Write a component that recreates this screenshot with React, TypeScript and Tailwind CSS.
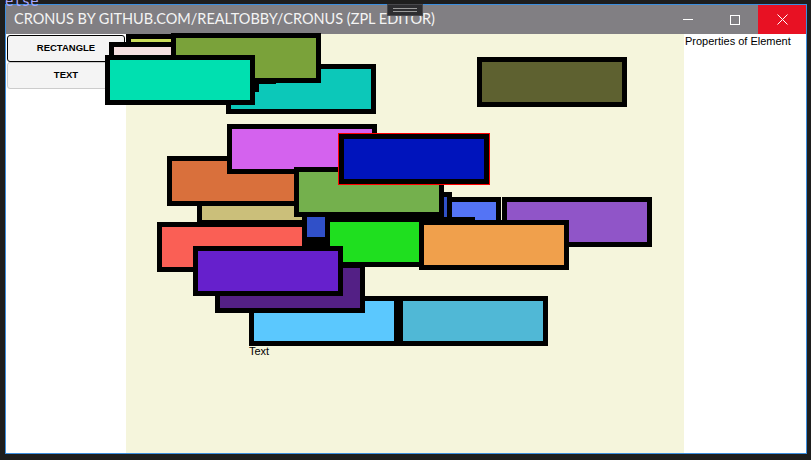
import React from "react";

// Boxes on the ZPL canvas, back to front. Coords are relative to the canvas.
const boxes: { id: string; cls: string }[] = [
  { id: "teal", cls: "left-[100px] top-[30px] bg-[#0cc8b9]" },
  { id: "lime", cls: "left-[0px] top-[0px] bg-[#cbdc5a]" },
  { id: "pink", cls: "left-[-17px] top-[8px] bg-[#f5dfe0]" },
  { id: "olivegreen", cls: "left-[45px] top-[-1px] bg-[#7aa23a]" },
  { id: "mint", cls: "left-[-21px] top-[21px] bg-[#00e0b0]" },
  { id: "olive", cls: "left-[351px] top-[23px] bg-[#5e6130]" },
  { id: "khaki", cls: "left-[71px] top-[141px] bg-[#cbbf7a]" },
  { id: "rust", cls: "left-[41px] top-[122px] bg-[#d9703c]" },
  { id: "magenta", cls: "left-[101px] top-[90px] bg-[#d462ee]" },
  { id: "periwinkle", cls: "left-[225px] top-[163px] bg-[#5474f5]" },
  { id: "purple", cls: "left-[376px] top-[163px] bg-[#9055c8]" },
  { id: "hiddenblue", cls: "left-[176px] top-[162px] bg-[#3050c8]" },
  { id: "smallblue", cls: "left-[176px] top-[158px] bg-[#3050c8]" },
  { id: "green", cls: "left-[168px] top-[133px] bg-[#74b04d]" },
  { id: "selected", cls: "left-[213px] top-[100px] bg-[#0014bc] ring-1 ring-[#ff0000]" },
  { id: "red", cls: "left-[31px] top-[188px] bg-[#fa5f55]" },
  { id: "brightgreen", cls: "left-[199px] top-[183px] bg-[#1fdf1f]" },
  { id: "orange", cls: "left-[293px] top-[186px] bg-[#f0a04c]" },
  { id: "lightblue", cls: "left-[123px] top-[262px] bg-[#5bc8fe]" },
  { id: "cyan", cls: "left-[272px] top-[262px] bg-[#50b8d6]" },
  { id: "darkpurple", cls: "left-[89px] top-[229px] bg-[#532085]" },
  { id: "violet", cls: "left-[67px] top-[212px] bg-[#6620cc]" },
];

function TitleBar() {
  return (
    <div className="flex h-[29px] shrink-0 items-center bg-[#817f83]">
      <div className="flex-1 pl-[8px] text-[14.5px] leading-none text-[#f4f4f4] [font-family:Lato,'Liberation_Sans',sans-serif]">
        CRONUS BY GITHUB.COM/REALTOBBY/CRONUS (ZPL EDITOR)
      </div>
      <div className="flex h-full w-[47px] items-center justify-center">
        <div className="h-px w-[10px] bg-white" />
      </div>
      <div className="flex h-full w-[47px] items-center justify-center">
        <div className="h-[10px] w-[10px] border border-white" />
      </div>
      <div className="flex h-full w-[48px] items-center justify-center bg-[#e81123]">
        <svg width="11" height="11" viewBox="0 0 11 11">
          <path d="M0.5 0.5 L10.5 10.5 M10.5 0.5 L0.5 10.5" stroke="white" strokeWidth="1" />
        </svg>
      </div>
    </div>
  );
}

function Toolbox() {
  const btn =
    "flex h-[27px] w-[118px] items-center justify-center rounded-[3px] bg-[#f4f4f4] text-[9.5px] font-bold text-black [font-family:'Liberation_Sans',Arial,sans-serif]";
  return (
    <div className="flex w-[120px] shrink-0 flex-col bg-white pl-[1px] pt-[1px]">
      <div className={`${btn} border border-black`}>RECTANGLE</div>
      <div className={`${btn} border border-[#cccccc]`}>TEXT</div>
    </div>
  );
}

function Canvas() {
  return (
    <div className="relative w-[558px] shrink-0 bg-[#f5f5dc]">
      {boxes.map((b) => (
        <div key={b.id} className={`absolute h-[50px] w-[150px] border-[5px] border-black ${b.cls}`} />
      ))}
      <span className="absolute left-[123px] top-[311px] text-[11px] leading-[13px] text-black [font-family:'Liberation_Sans',Arial,sans-serif]">
        Text
      </span>
    </div>
  );
}

export default function App() {
  return (
    <div className="relative h-[460px] w-[811px] overflow-hidden bg-[#1e1e1e] pl-[5px] pt-[4px]">
      <span className="absolute left-[5px] top-[-9px] text-[14px] text-[#a9a9ff] [font-family:'DejaVu_Sans_Mono',monospace]">
        else
      </span>
      <div className="flex h-[450px] w-[802px] flex-col border border-[#3c8ede]">
        <TitleBar />
        <div className="flex flex-1">
          <Toolbox />
          <Canvas />
          <div className="flex-1 bg-white pl-px pt-[1px] text-[11px] leading-[13px] text-black [font-family:'Liberation_Sans',Arial,sans-serif]">
            Properties of Element
          </div>
        </div>
      </div>
      <div className="absolute left-[387px] top-[4px] flex h-[12px] w-[36px] flex-col items-center justify-center gap-[2px] border border-[#48484c] bg-[#2d2d30]">
        <div className="h-px w-[24px] bg-[#9a9a9a]" />
        <div className="h-px w-[24px] bg-[#9a9a9a]" />
      </div>
    </div>
  );
}
